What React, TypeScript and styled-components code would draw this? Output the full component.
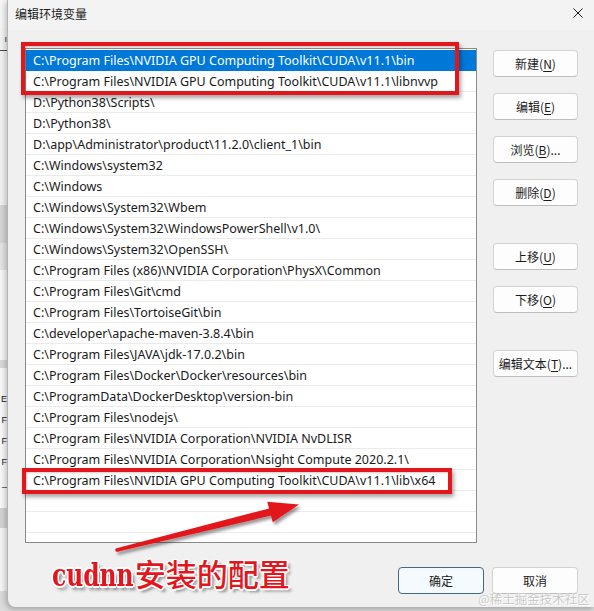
import React from "react";
import styled, { createGlobalStyle } from "styled-components";

const GlobalStyle = createGlobalStyle`
  html, body { margin: 0; padding: 0; }
  body {
    width: 594px;
    height: 611px;
    overflow: hidden;
    background: #dcdcdc;
    font-family: "Noto Sans", "Noto Sans CJK SC", sans-serif;
  }
`;

const Screen = styled.div`
  position: relative;
  display: flex;
  align-items: flex-start;
  width: 594px;
  height: 611px;
  overflow: hidden;
  background: #dcdcdc;
`;

/* ---------- background window strip ---------- */
const BackWindow = styled.div`
  flex: none;
  width: 7px;
  height: 611px;
  display: flex;
  flex-direction: column;
  overflow: hidden;
`;

const BackBand = styled.div<{ $h: number; $bg: string; $line?: boolean }>`
  flex: none;
  height: ${(p) => p.$h}px;
  background: ${(p) => p.$bg};
  border-bottom: ${(p) => (p.$line ? "1px solid #4a4a4a" : "none")};
  box-sizing: border-box;
  display: flex;
  justify-content: flex-end;
  align-items: center;
  overflow: hidden;
  font-family: "Liberation Sans", sans-serif;
  font-size: 9px;
  color: #222;
  white-space: nowrap;
`;

/* ---------- dialog ---------- */
const Dialog = styled.div`
  flex: 1;
  height: 607px;
  display: flex;
  flex-direction: column;
  background: #f0f0f0;
  border-left: 1px solid #b4b4b4;
  border-bottom-left-radius: 8px;
  box-shadow: -1px 2px 6px rgba(0, 0, 0, 0.28);
`;

const TitleBar = styled.div`
  height: 30px;
  flex: none;
  display: flex;
  align-items: center;
  padding-left: 7px;
  background: #f3f3f3;
  font-family: "Noto Sans CJK SC", sans-serif;
  font-size: 12px;
  color: #1b1b1b;
`;

const Title = styled.span`
  margin-top: -4px;
`;

const CloseBox = styled.div`
  margin-left: auto;
  margin-right: 11px;
  margin-top: -5px;
  width: 10px;
  height: 10px;
  display: flex;
`;

const Body = styled.div`
  flex: 1;
  display: flex;
  flex-direction: column;
  padding: 18px 16px 0 17px;
`;

const Main = styled.div`
  display: flex;
  gap: 16px;
`;

const ListBox = styled.div`
  width: 452px;
  height: 495px;
  box-sizing: border-box;
  border: 1px solid #8a8a8a;
  background: #ffffff;
  padding-top: 1px;
  overflow: hidden;
`;

const Row = styled.div<{ $selected?: boolean }>`
  height: 21px;
  box-sizing: border-box;
  border-bottom: 1px solid ${(p) => (p.$selected ? "#0078d7" : "#ebebeb")};
  padding-left: 7px;
  padding-top: 1px;
  display: flex;
  align-items: center;
  background: ${(p) => (p.$selected ? "#0078d7" : "transparent")};
  color: ${(p) => (p.$selected ? "#ffffff" : "#1a1a1a")};
  font-family: "Noto Sans", "Noto Sans CJK SC", sans-serif;
  font-size: 12.5px;
  white-space: nowrap;
`;

const ButtonColumn = styled.div`
  width: 85px;
  padding-top: 2px;
  display: flex;
  flex-direction: column;
  gap: 16px;
`;

const ButtonGroup = styled.div<{ $push?: boolean }>`
  display: flex;
  flex-direction: column;
  gap: 16px;
  margin-top: ${(p) => (p.$push ? "21px" : "0")};
`;

const Button = styled.div<{ $default?: boolean; $w?: number }>`
  width: ${(p) => (p.$w ? `${p.$w}px` : "100%")};
  height: 27px;
  box-sizing: border-box;
  display: flex;
  align-items: center;
  justify-content: center;
  border-radius: 4px;
  border: 1px solid ${(p) => (p.$default ? "#3f6a84" : "#d3d3d3")};
  border-bottom-color: ${(p) => (p.$default ? "#3f6a84" : "#bdbdbd")};
  background: ${(p) => (p.$default ? "#f4fafd" : "#fdfdfd")};
  font-family: "Noto Sans CJK SC", sans-serif;
  font-size: 12px;
  color: #1b1b1b;
  white-space: nowrap;
  u {
    text-underline-offset: 2px;
  }
`;

const Footer = styled.div`
  display: flex;
  justify-content: flex-end;
  gap: 8px;
  margin-top: 24px;
`;

/* ---------- annotations ---------- */
const RedBox = styled.div<{ $x: number; $y: number; $w: number; $h: number }>`
  position: absolute;
  left: ${(p) => p.$x}px;
  top: ${(p) => p.$y}px;
  width: ${(p) => p.$w}px;
  height: ${(p) => p.$h}px;
  box-sizing: border-box;
  border: 4px solid #e3161b;
  box-shadow: 2px 3px 4px rgba(0, 0, 0, 0.35), inset 1px 1px 2px rgba(0, 0, 0, 0.2);
  pointer-events: none;
`;

const ArrowSvg = styled.svg`
  position: absolute;
  left: 100px;
  top: 485px;
  width: 215px;
  height: 80px;
  overflow: visible;
  pointer-events: none;
`;

const Caption = styled.div`
  position: absolute;
  left: 52px;
  top: 557px;
  display: flex;
  align-items: baseline;
  color: #e4151d;
  line-height: 1;
  white-space: nowrap;
  text-shadow: 1.5px 0 #fff, -1.5px 0 #fff, 0 1.5px #fff, 0 -1.5px #fff,
    1.2px 1.2px #fff, -1.2px -1.2px #fff, 1.2px -1.2px #fff, -1.2px 1.2px #fff,
    3px 3px 3px rgba(0, 0, 0, 0.45);
`;

const CaptionLatin = styled.span`
  display: inline-block;
  font-family: "DejaVu Serif Condensed", "DejaVu Serif", serif;
  font-stretch: condensed;
  font-weight: 700;
  font-size: 26px;
  margin-right: 1px;
  transform: scaleY(1.2);
  transform-origin: 50% 85%;
`;

const CaptionCjk = styled.span`
  font-family: "Noto Sans CJK SC", sans-serif;
  font-weight: 500;
  font-size: 31px;
`;

const Watermark = styled.div`
  position: absolute;
  left: 478px;
  top: 589px;
  font-family: "Noto Sans CJK SC", sans-serif;
  font-size: 12.5px;
  color: #c9c9c9;
  white-space: nowrap;
  text-shadow: 0 0 1px #fff, 1px 1px 0 #fff;
`;

const paths = [
  "C:\\Program Files\\NVIDIA GPU Computing Toolkit\\CUDA\\v11.1\\bin",
  "C:\\Program Files\\NVIDIA GPU Computing Toolkit\\CUDA\\v11.1\\libnvvp",
  "D:\\Python38\\Scripts\\",
  "D:\\Python38\\",
  "D:\\app\\Administrator\\product\\11.2.0\\client_1\\bin",
  "C:\\Windows\\system32",
  "C:\\Windows",
  "C:\\Windows\\System32\\Wbem",
  "C:\\Windows\\System32\\WindowsPowerShell\\v1.0\\",
  "C:\\Windows\\System32\\OpenSSH\\",
  "C:\\Program Files (x86)\\NVIDIA Corporation\\PhysX\\Common",
  "C:\\Program Files\\Git\\cmd",
  "C:\\Program Files\\TortoiseGit\\bin",
  "C:\\developer\\apache-maven-3.8.4\\bin",
  "C:\\Program Files\\JAVA\\jdk-17.0.2\\bin",
  "C:\\Program Files\\Docker\\Docker\\resources\\bin",
  "C:\\ProgramData\\DockerDesktop\\version-bin",
  "C:\\Program Files\\nodejs\\",
  "C:\\Program Files\\NVIDIA Corporation\\NVIDIA NvDLISR",
  "C:\\Program Files\\NVIDIA Corporation\\Nsight Compute 2020.2.1\\",
  "C:\\Program Files\\NVIDIA GPU Computing Toolkit\\CUDA\\v11.1\\lib\\x64",
  "",
  "",
];

const backBands: { h: number; bg: string; text?: string; line?: boolean }[] = [
  { h: 28, bg: "#f6f6f6" },
  { h: 23, bg: "#f3f3f3", text: "ı", line: true },
  { h: 154, bg: "#f2f2f2" },
  { h: 38, bg: "#d5d5d5" },
  { h: 27, bg: "#e4e4e4" },
  { h: 90, bg: "#f7f7f7" },
  { h: 8, bg: "#d9d9d9" },
  { h: 20, bg: "#f8f8f8" },
  { h: 21, bg: "#f8f8f8", text: "E" },
  { h: 21, bg: "#f8f8f8", text: "F" },
  { h: 21, bg: "#f8f8f8", text: "F" },
  { h: 21, bg: "#f8f8f8", text: "F" },
  { h: 21, bg: "#f8f8f8", text: "_" },
  { h: 15, bg: "#f8f8f8" },
  { h: 20, bg: "#d4d4d4" },
  { h: 63, bg: "#f5f5f5" },
  { h: 21, bg: "#dcdcdc" },
];

export default function App() {
  return (
    <>
      <GlobalStyle />
      <Screen>
        <BackWindow>
          {backBands.map((b, i) => (
            <BackBand key={i} $h={b.h} $bg={b.bg} $line={b.line}>
              {b.text}
            </BackBand>
          ))}
        </BackWindow>

        <Dialog>
          <TitleBar>
            <Title>编辑环境变量</Title>
            <CloseBox>
              <svg width="10" height="10" viewBox="0 0 10 10">
                <path d="M0.5 0.5 L9.5 9.5 M9.5 0.5 L0.5 9.5" stroke="#1b1b1b" strokeWidth="1" fill="none" />
              </svg>
            </CloseBox>
          </TitleBar>

          <Body>
            <Main>
              <ListBox>
                {paths.map((p, i) => (
                  <Row key={i} $selected={i === 0}>
                    {p}
                  </Row>
                ))}
              </ListBox>

              <ButtonColumn>
                <ButtonGroup>
                  <Button>新建(<u>N</u>)</Button>
                  <Button>编辑(<u>E</u>)</Button>
                  <Button>浏览(<u>B</u>)...</Button>
                  <Button>删除(<u>D</u>)</Button>
                </ButtonGroup>
                <ButtonGroup $push>
                  <Button>上移(<u>U</u>)</Button>
                  <Button>下移(<u>O</u>)</Button>
                </ButtonGroup>
                <ButtonGroup $push>
                  <Button>编辑文本(<u>T</u>)...</Button>
                </ButtonGroup>
              </ButtonColumn>
            </Main>

            <Footer>
              <Button $default $w={86}>确定</Button>
              <Button $w={86}>取消</Button>
            </Footer>
          </Body>
        </Dialog>

        <RedBox $x={21} $y={42} $w={438} $h={53} />
        <RedBox $x={22} $y={468} $w={430} $h={26} />

        <ArrowSvg viewBox="0 0 215 80">
          <defs>
            <filter id="arrowShadow" x="-10%" y="-30%" width="130%" height="180%">
              <feDropShadow dx="2" dy="3" stdDeviation="1.6" floodColor="#000" floodOpacity="0.4" />
            </filter>
          </defs>
          <g filter="url(#arrowShadow)" fill="#e3161b">
            <polygon points="16.6,63.2 169.1,23.4 167.2,16.8 199,19.6 172.8,37.2 170.9,30.6 17.4,66.8" />
            <circle cx="17" cy="65" r="1.8" />
          </g>
        </ArrowSvg>

        <Caption>
          <CaptionLatin>cudnn</CaptionLatin>
          <CaptionCjk>安装的配置</CaptionCjk>
        </Caption>

        <Watermark>@稀土掘金技术社区</Watermark>
      </Screen>
    </>
  );
}
